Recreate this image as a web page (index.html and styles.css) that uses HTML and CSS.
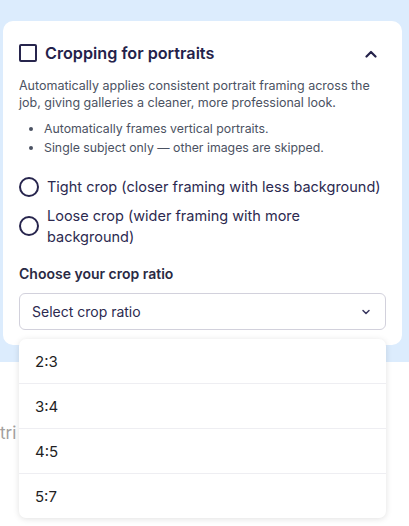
FILE: index.html
```html
<!DOCTYPE html>
<html lang="en">
<head>
<meta charset="utf-8">
<title>Cropping for portraits</title>
<link rel="stylesheet" href="styles.css">
</head>
<body>
  <section class="panel">
    <div class="card">
      <div class="card-head">
        <span class="checkbox"></span>
        <h2 class="card-title">Cropping for portraits</h2>
        <svg class="chevron-up" width="12" height="8" viewBox="0 0 12 8" aria-hidden="true">
          <path d="M1.5 6.5 L6 2 L10.5 6.5" fill="none" stroke="#24224a" stroke-width="2.2" stroke-linecap="round" stroke-linejoin="round"/>
        </svg>
      </div>
      <p class="desc">Automatically applies consistent portrait framing across the job, giving galleries a cleaner, more professional look.</p>
      <ul class="notes">
        <li>Automatically frames vertical portraits.</li>
        <li>Single subject only — other images are skipped.</li>
      </ul>
      <div class="options">
        <label class="option"><span class="radio"></span><span class="option-text">Tight crop (closer framing with less background)</span></label>
        <label class="option"><span class="radio"></span><span class="option-text">Loose crop (wider framing with more background)</span></label>
      </div>
      <div class="field">
        <div class="field-label">Choose your crop ratio</div>
        <div class="select">
          <span class="select-text">Select crop ratio</span>
          <svg class="chevron-down" width="10" height="6" viewBox="0 0 10 6" aria-hidden="true">
            <path d="M2 1.5 L5 4.5 L8 1.5" fill="none" stroke="#3a3860" stroke-width="1.5" stroke-linecap="round" stroke-linejoin="round"/>
          </svg>
        </div>
        <ul class="menu">
          <li class="menu-item">2:3</li>
          <li class="menu-item">3:4</li>
          <li class="menu-item">4:5</li>
          <li class="menu-item">5:7</li>
        </ul>
      </div>
    </div>
  </section>
  <section class="below">
    <p class="below-text">tri</p>
  </section>
</body>
</html>
```
FILE: styles.css
```css
* { box-sizing: border-box; }

html, body {
  margin: 0;
  padding: 0;
  background: #ffffff;
  font-family: Inter, "Noto Sans", sans-serif;
  color: #24224a;
}

body {
  min-height: 100vh;
}

.panel {
  background: #dcecfd;
  padding: 21px 7px 17px 3px;
}

.card {
  background: #ffffff;
  border-radius: 10px;
  padding: 23px 16px 15px 16px;
}

.card-head {
  display: flex;
  align-items: center;
  height: 18px;
}

.checkbox {
  width: 18px;
  height: 18px;
  border: 2px solid #27254d;
  border-radius: 2px;
  flex: none;
}

.card-title {
  margin: 0 0 0 8px;
  font-size: 16.2px;
  font-weight: 600;
  line-height: 20px;
  color: #24224a;
  flex: 1;
}

.chevron-up {
  margin-right: 9px;
  margin-top: 1px;
}

.desc {
  margin: 15px 0 0 0;
  font-size: 12.5px;
  line-height: 17px;
  color: #4b5262;
}

.notes {
  margin: 8px 0 0 0;
  padding-left: 25px;
  font-size: 12.3px;
  line-height: 19px;
  color: #4b5262;
}

.options {
  margin-top: 19px;
  display: flex;
  flex-direction: column;
  gap: 8px;
}

.option {
  display: flex;
  align-items: center;
  gap: 8px;
}

.radio {
  width: 20px;
  height: 20px;
  border: 2px solid #27254d;
  border-radius: 50%;
  flex: none;
}

.option-text {
  font-size: 14.5px;
  line-height: 21px;
  color: #2c2a50;
}

.field {
  position: relative;
  margin-top: 18px;
}

.field-label {
  font-size: 14px;
  font-weight: 600;
  line-height: 18px;
  color: #2a2a44;
}

.select {
  margin-top: 10px;
  height: 37px;
  border: 1px solid #d2d1dc;
  border-radius: 6px;
  display: flex;
  align-items: center;
  justify-content: space-between;
  padding: 0 14px 0 12px;
}

.select-text {
  font-size: 14px;
  color: #2c2a50;
}

/* open dropdown list, floats over the rest of the page */
.menu {
  position: absolute;
  left: 0;
  right: 0;
  top: 100%;
  margin: 9px 0 0 0;
  padding: 0;
  list-style: none;
  background: #ffffff;
  border-radius: 7px;
  box-shadow: 0 1px 6px rgba(0, 0, 0, 0.12);
  z-index: 5;
}

.menu-item {
  height: 45px;
  display: flex;
  align-items: center;
  padding-left: 16px;
  font-size: 15px;
  color: #1f1f24;
  border-top: 1px solid #eeeef2;
}

.menu-item:first-child {
  border-top: 0;
  height: 44px;
}

.below {
  padding-top: 61px;
}

.below-text {
  margin: 0;
  font-size: 17px;
  color: #a39f9d;
  line-height: 20px;
}
```
